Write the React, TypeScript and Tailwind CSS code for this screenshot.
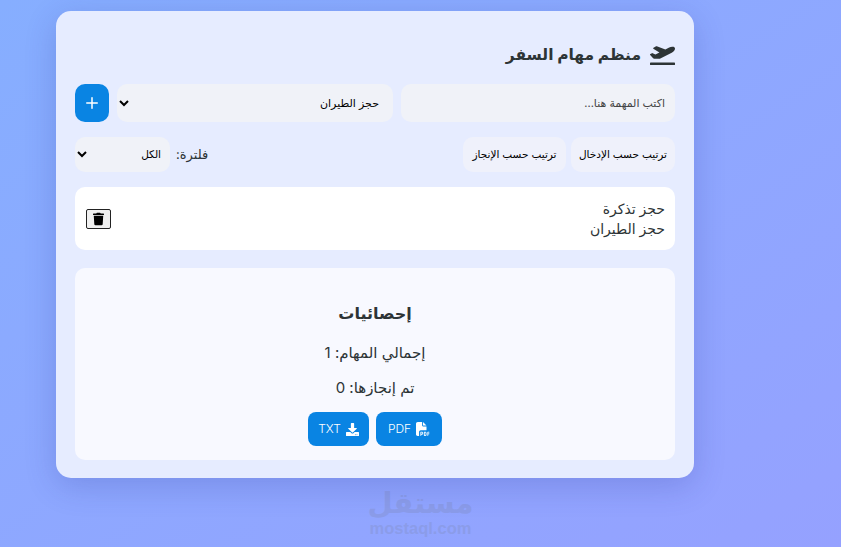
import { FaDownload, FaPlaneDeparture, FaTrash } from 'react-icons/fa';
import { FaFilePdf } from 'react-icons/fa6';
import { Plus } from 'lucide-react';

const FONT = "font-['Inter','DejaVu_Sans',sans-serif]";

function Watermark() {
  return (
    <div className="absolute left-[369px] top-[487px] w-[103px] flex flex-col items-center text-[#8b9ce9] pointer-events-none">
      <span className="text-[29px] leading-[33px] font-bold font-['DejaVu_Sans',sans-serif]">مستقل</span>
      <span className="text-[16.5px] leading-[16px] font-bold font-['Liberation_Sans',sans-serif]">mostaql.com</span>
    </div>
  );
}

export default function App() {
  return (
    <div dir="rtl" className={`relative w-[841px] h-[547px] overflow-hidden bg-gradient-to-br from-[#86aeff] to-[#95a1ff] ${FONT}`}>
      <Watermark />
      <div className="absolute left-[56px] top-[11px] w-[638px] h-[467px] rounded-[15px] bg-[#e6ecff] shadow-[0_8px_32px_rgba(31,38,135,0.2)] px-[19px] pt-[28px]">
        {/* Header */}
        <h1 className="flex items-center gap-[9px] h-[32px] text-[15.5px] font-bold text-[#2d3436]">
          <FaPlaneDeparture className="w-[25px] h-[20px]" />
          منظم مهام السفر
        </h1>

        {/* Add task */}
        <div className="flex items-center gap-2 mt-[13px] h-[38px]">
          <input
            placeholder="اكتب المهمة هنا..."
            className="w-[274px] h-[38px] rounded-[10px] bg-[#f0f2f8] px-[10px] text-[11px] placeholder:text-[#444] outline-none"
          />
          <select className="w-[276px] h-[38px] rounded-[10px] bg-[#f0f2f8] px-[10px] text-[11px] text-black outline-none">
            <option>حجز الطيران</option>
          </select>
          <button className="w-[34px] h-[38px] rounded-[10px] bg-[#0984e3] text-white flex items-center justify-center">
            <Plus size={18} strokeWidth={2} />
          </button>
        </div>

        {/* Sort and filter */}
        <div className="flex items-center justify-between mt-[15px] h-[35px]">
          <div className="flex items-center gap-[5px]">
            <button className="w-[104px] h-[35px] rounded-[10px] bg-[#eff1fb] text-[10.5px] text-black">ترتيب حسب الإدخال</button>
            <button className="w-[103px] h-[35px] rounded-[10px] bg-[#eff1fb] text-[10.5px] text-black">ترتيب حسب الإنجاز</button>
          </div>
          <div className="flex items-center gap-[6px]">
            <span className="text-[13px] text-[#2d3436]">فلترة:</span>
            <select className="w-[95px] h-[35px] rounded-[10px] bg-[#f0f2f8] px-[5px] text-[10.5px] text-black outline-none">
              <option>الكل</option>
            </select>
          </div>
        </div>

        {/* Task */}
        <div className="flex items-center justify-between mt-[15px] h-[63px] rounded-[10px] bg-white pr-[10px] pl-[11px] text-[14px] leading-[20px] text-[#2d3436]">
          <div>
            <div>حجز تذكرة</div>
            <div>حجز الطيران</div>
          </div>
          <button className="w-[25px] h-[20px] rounded-[2px] border border-[#222] bg-[#f0f0f0] flex items-center justify-center text-black">
            <FaTrash className="w-[11px] h-[14px]" />
          </button>
        </div>

        {/* Stats */}
        <div className="flex flex-col items-center mt-[18px] h-[192px] rounded-[10px] bg-[#f8f9ff] pt-[32px] text-[#2d3436]">
          <h3 className="text-[16px] leading-[26px] font-bold">إحصائيات</h3>
          <p className="mt-[17px] text-[15px] leading-[20px]">إجمالي المهام: 1</p>
          <p className="mt-[15px] text-[15px] leading-[20px]">تم إنجازها: 0</p>
          <div className="flex gap-[7px] mt-[14px]">
            <button className="w-[66px] h-[34px] rounded-[8px] bg-[#0984e3] text-white text-[12px] font-light flex items-center justify-center gap-[5px]">
              <FaFilePdf className="w-[14px] h-[14px]" />
              PDF
            </button>
            <button className="w-[61px] h-[34px] rounded-[8px] bg-[#0984e3] text-white text-[12px] font-light flex items-center justify-center gap-[5px]">
              <FaDownload className="w-[13px] h-[13px]" />
              TXT
            </button>
          </div>
        </div>
      </div>
    </div>
  );
}
